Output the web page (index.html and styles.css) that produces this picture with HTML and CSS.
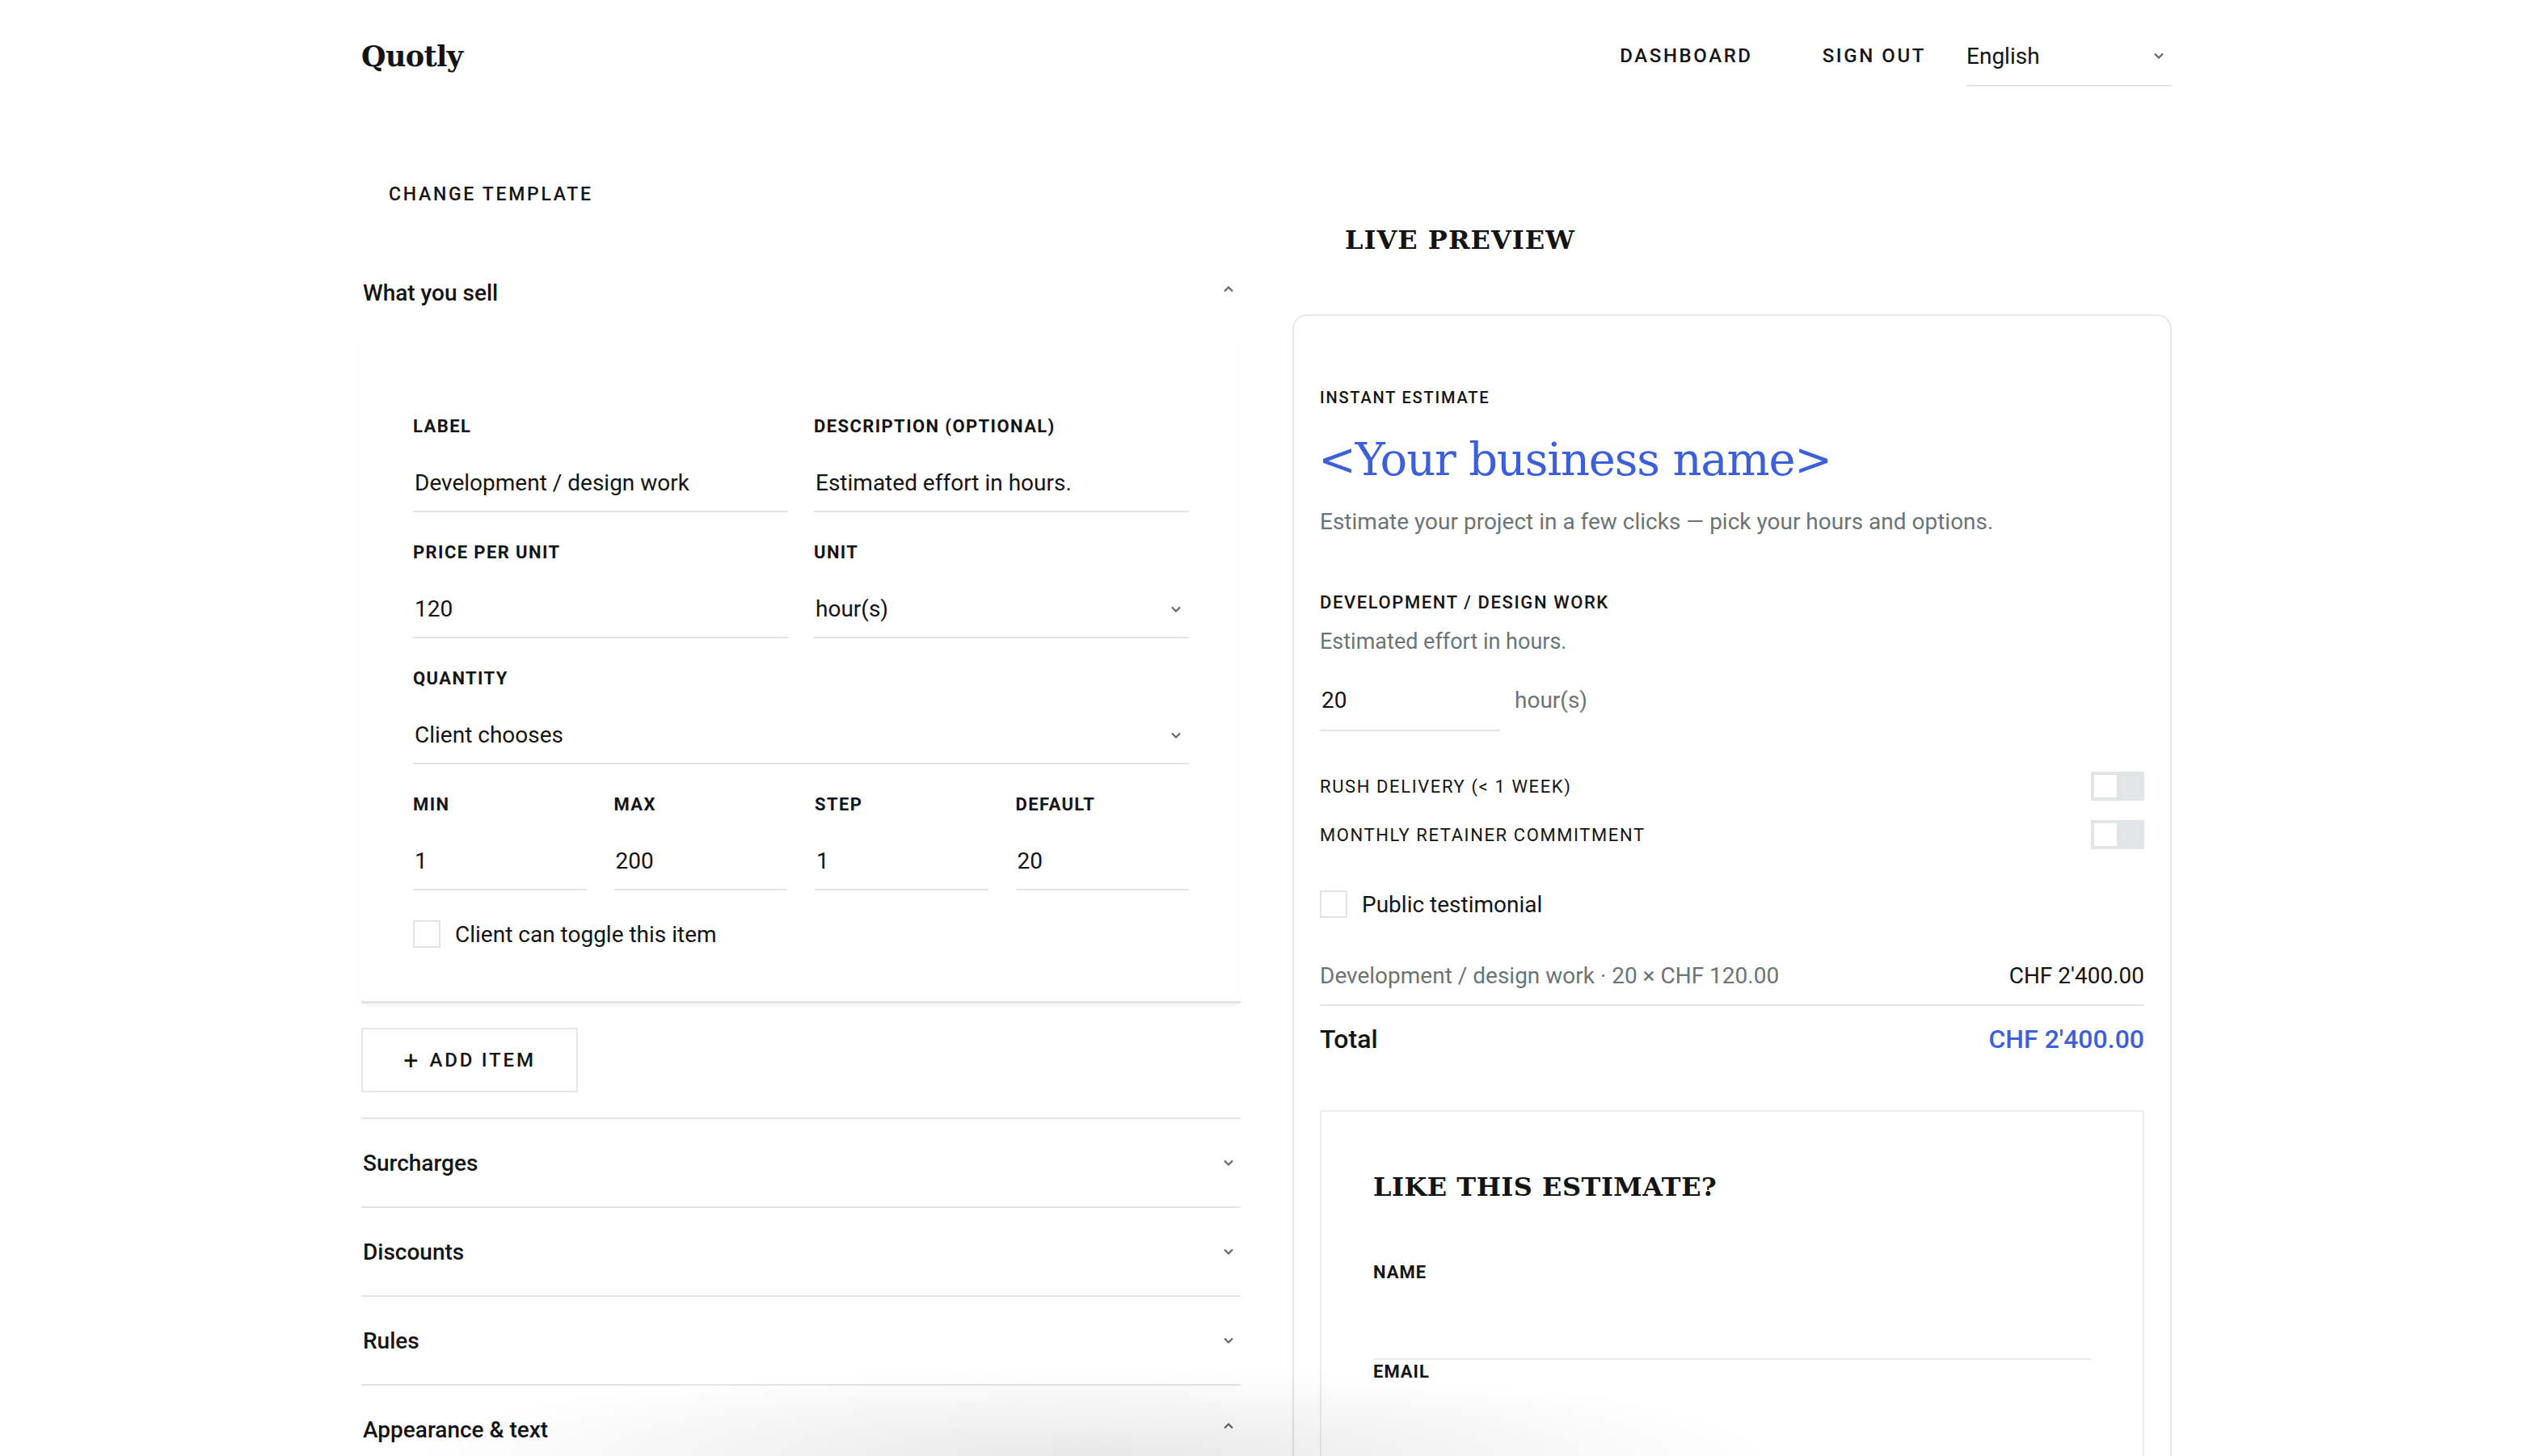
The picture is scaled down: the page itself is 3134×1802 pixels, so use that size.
FILE: index.html
```html
<!DOCTYPE html>
<html lang="en">
<head>
    <meta charset="UTF-8">
    <meta name="viewport" content="width=device-width, initial-scale=1.0">
    <title>Quotly - Editor</title>
    <link rel="stylesheet" href="styles.css">
</head>
<body>
    <header class="topbar">
        <div class="logo">Quotly</div>
        <nav class="nav">
            <a class="nav-link" href="#">Dashboard</a>
            <a class="nav-link nav-link-last" href="#">Sign out</a>
            <div class="lang-select">
                <span>English</span>
                <svg class="chevron" width="12" height="8" viewBox="0 0 12 8"><polyline points="1,1.5 6,6.5 11,1.5"/></svg>
            </div>
        </nav>
    </header>

    <main class="layout">
        <!-- Editor column -->
        <section class="editor">
            <button class="text-button">Change template</button>

            <div class="section section-open">
                <div class="section-head">
                    <span>What you sell</span>
                    <svg class="chevron chevron-up" width="12" height="8" viewBox="0 0 12 8"><polyline points="1,6.5 6,1.5 11,6.5"/></svg>
                </div>

                <div class="item-panel">
                    <div class="row row-2">
                        <div class="field">
                            <label>Label</label>
                            <div class="input">Development / design work</div>
                        </div>
                        <div class="field">
                            <label>Description (optional)</label>
                            <div class="input">Estimated effort in hours.</div>
                        </div>
                    </div>
                    <div class="row row-2">
                        <div class="field">
                            <label>Price per unit</label>
                            <div class="input">120</div>
                        </div>
                        <div class="field">
                            <label>Unit</label>
                            <div class="input input-select">
                                <span>hour(s)</span>
                                <svg class="chevron" width="12" height="8" viewBox="0 0 12 8"><polyline points="1,1.5 6,6.5 11,1.5"/></svg>
                            </div>
                        </div>
                    </div>
                    <div class="row">
                        <div class="field">
                            <label>Quantity</label>
                            <div class="input input-select">
                                <span>Client chooses</span>
                                <svg class="chevron" width="12" height="8" viewBox="0 0 12 8"><polyline points="1,1.5 6,6.5 11,1.5"/></svg>
                            </div>
                        </div>
                    </div>
                    <div class="row row-4">
                        <div class="field">
                            <label>Min</label>
                            <div class="input">1</div>
                        </div>
                        <div class="field">
                            <label>Max</label>
                            <div class="input">200</div>
                        </div>
                        <div class="field">
                            <label>Step</label>
                            <div class="input">1</div>
                        </div>
                        <div class="field">
                            <label>Default</label>
                            <div class="input">20</div>
                        </div>
                    </div>
                    <div class="check-row">
                        <span class="checkbox"></span>
                        <span>Client can toggle this item</span>
                    </div>
                </div>

                <button class="outline-button"><span class="plus">+</span>Add item</button>
            </div>

            <div class="section">
                <div class="section-head">
                    <span>Surcharges</span>
                    <svg class="chevron" width="12" height="8" viewBox="0 0 12 8"><polyline points="1,1.5 6,6.5 11,1.5"/></svg>
                </div>
            </div>
            <div class="section">
                <div class="section-head">
                    <span>Discounts</span>
                    <svg class="chevron" width="12" height="8" viewBox="0 0 12 8"><polyline points="1,1.5 6,6.5 11,1.5"/></svg>
                </div>
            </div>
            <div class="section">
                <div class="section-head">
                    <span>Rules</span>
                    <svg class="chevron" width="12" height="8" viewBox="0 0 12 8"><polyline points="1,1.5 6,6.5 11,1.5"/></svg>
                </div>
            </div>
            <div class="section">
                <div class="section-head">
                    <span>Appearance &amp; text</span>
                    <svg class="chevron chevron-up" width="12" height="8" viewBox="0 0 12 8"><polyline points="1,6.5 6,1.5 11,6.5"/></svg>
                </div>
            </div>
        </section>

        <!-- Preview column -->
        <section class="preview">
            <h2 class="preview-title">Live preview</h2>

            <div class="preview-card">
                <div class="eyebrow">Instant estimate</div>
                <h1 class="business-name">&lt;Your business name&gt;</h1>
                <p class="tagline">Estimate your project in a few clicks — pick your hours and options.</p>

                <div class="item-label">Development / design work</div>
                <div class="item-desc">Estimated effort in hours.</div>
                <div class="qty-row">
                    <div class="qty-input">20</div>
                    <span class="qty-unit">hour(s)</span>
                </div>

                <div class="toggle-row">
                    <span>Rush delivery (&lt; 1 week)</span>
                    <span class="toggle"><span class="knob"></span></span>
                </div>
                <div class="toggle-row">
                    <span>Monthly retainer commitment</span>
                    <span class="toggle"><span class="knob"></span></span>
                </div>

                <div class="check-row preview-check">
                    <span class="checkbox"></span>
                    <span>Public testimonial</span>
                </div>

                <div class="line-item">
                    <span class="muted">Development / design work · 20 × CHF 120.00</span>
                    <span>CHF 2'400.00</span>
                </div>
                <div class="total-row">
                    <span>Total</span>
                    <span class="total-amount">CHF 2'400.00</span>
                </div>

                <div class="lead-card">
                    <h3 class="lead-title">Like this estimate?</h3>
                    <label class="lead-label">Name</label>
                    <div class="lead-input"></div>
                    <label class="lead-label lead-label-tight">Email</label>
                    <div class="lead-input"></div>
                </div>
            </div>
        </section>
    </main>

    <div class="bottom-fade"></div>
</body>
</html>
```

FILE: styles.css
```css
body {
    font-family: Roboto, "Noto Sans", Arial, sans-serif;
    color: #141414;
    background-color: #fff;
    margin: 0;
    overflow: hidden;
}

a {
    color: inherit;
    text-decoration: none;
}

button {
    font-family: inherit;
    color: inherit;
    background: none;
    cursor: pointer;
}

.chevron {
    fill: none;
    stroke: #5f686b;
    stroke-width: 2.2;
    flex-shrink: 0;
}

.chevron-up {
    margin-top: -8px;
}

/* Top bar */

.topbar {
    width: 2240px;
    height: 138px;
    margin: 0 auto;
    display: flex;
    align-items: center;
    justify-content: space-between;
}

.logo {
    font-family: "DejaVu Serif", serif;
    font-weight: bold;
    font-size: 35px;
    letter-spacing: -0.6px;
}

.nav {
    display: flex;
    align-items: center;
}

.nav-link {
    font-size: 24px;
    font-weight: 500;
    letter-spacing: 2.6px;
    text-transform: uppercase;
    margin-right: 86px;
}

.nav-link-last {
    margin-right: 50px;
}

.lang-select {
    width: 254px;
    height: 74px;
    border-bottom: 2px solid #e1e5e5;
    display: flex;
    align-items: center;
    justify-content: space-between;
    font-size: 28px;
    box-sizing: border-box;
    padding-right: 10px;
    margin-top: 2px;
}

/* Two columns */

.layout {
    width: 2240px;
    margin: 0 auto;
    display: grid;
    grid-template-columns: 1088px 1fr;
    column-gap: 64px;
}

/* Editor */

.text-button {
    border: none;
    font-size: 23px;
    font-weight: 500;
    letter-spacing: 2.7px;
    text-transform: uppercase;
    height: 64px;
    padding: 0 34px;
    margin-top: 70px;
    display: block;
}

.section {
    border-top: 2px solid #e3e6e6;
}

.section-open {
    border-top: none;
    margin-top: 35px;
}

.section-head {
    height: 108px;
    display: flex;
    align-items: center;
    justify-content: space-between;
    padding: 0 9px 0 2px;
    font-size: 28px;
    font-weight: 500;
}

.section-open .section-head {
    height: 110px;
}

.item-panel {
    padding: 98px 64px 66px;
    border-bottom: 3px solid #e2e4e4;
    box-shadow: 0 5px 6px -3px rgba(0, 0, 0, 0.07);
}

.row {
    display: grid;
    grid-template-columns: 1fr;
    column-gap: 32px;
    margin-bottom: 37px;
}

.row-2 {
    grid-template-columns: 1fr 1fr;
}

.row-4 {
    grid-template-columns: repeat(4, 1fr);
    column-gap: 34px;
}

.field label {
    display: block;
    font-size: 22px;
    line-height: 26px;
    font-weight: 700;
    text-transform: uppercase;
    letter-spacing: 1.4px;
}

.input {
    font-size: 28px;
    line-height: 33px;
    padding: 40px 2px 18px;
    border-bottom: 2px solid #e1e5e5;
}

.input-select {
    display: flex;
    align-items: center;
    justify-content: space-between;
    padding-right: 10px;
}

.check-row {
    display: flex;
    align-items: center;
    font-size: 28px;
    gap: 18px;
}

.checkbox {
    width: 34px;
    height: 34px;
    box-sizing: border-box;
    border: 2px solid #e1e5e5;
}

.outline-button {
    display: flex;
    align-items: center;
    justify-content: center;
    width: 268px;
    height: 80px;
    margin: 30px 0 31px;
    border: 2px solid #e6e6e6;
    font-size: 24px;
    font-weight: 500;
    letter-spacing: 2.8px;
    text-transform: uppercase;
}

.plus {
    font-size: 32px;
    font-weight: 400;
    margin-right: 14px;
    letter-spacing: 0;
}

/* Preview */

.preview-title {
    font-family: "DejaVu Serif", serif;
    font-weight: bold;
    font-size: 32px;
    line-height: 44px;
    letter-spacing: 1px;
    text-transform: uppercase;
    margin: 137px 0 70px 65px;
}

.preview-card {
    border: 2px solid #e6e8e8;
    border-radius: 18px;
    padding: 89px 32px 0;
    height: 1500px;
}

.eyebrow {
    font-size: 20px;
    line-height: 24px;
    font-weight: 500;
    letter-spacing: 1.8px;
    text-transform: uppercase;
}

.business-name {
    font-family: "DejaVu Serif", serif;
    font-weight: normal;
    font-size: 56px;
    line-height: 70px;
    letter-spacing: -1.2px;
    color: #3d5fd9;
    margin: 30px 0 0 -2px;
}

.tagline {
    font-size: 28px;
    line-height: 34px;
    color: #6b7477;
    margin: 25px 0 0;
}

.item-label {
    font-size: 22px;
    line-height: 26px;
    font-weight: 500;
    letter-spacing: 1.6px;
    text-transform: uppercase;
    margin-top: 70px;
}

.item-desc {
    font-size: 27px;
    line-height: 32px;
    color: #6b7477;
    margin-top: 19px;
}

.qty-row {
    display: flex;
    align-items: flex-start;
    margin-top: 24px;
}

.qty-input {
    width: 223px;
    box-sizing: border-box;
    font-size: 28px;
    line-height: 33px;
    padding: 16px 2px 20px;
    border-bottom: 2px solid #e1e5e5;
}

.qty-unit {
    font-size: 28px;
    line-height: 33px;
    color: #6b7477;
    padding: 16px 0 0 18px;
}

.toggle-row {
    display: flex;
    align-items: center;
    justify-content: space-between;
    font-size: 22px;
    letter-spacing: 1.6px;
    text-transform: uppercase;
    margin-top: 50px;
}

.toggle-row + .toggle-row {
    margin-top: 24px;
}

.toggle {
    width: 66px;
    height: 36px;
    box-sizing: border-box;
    padding: 4px;
    background-color: #e1e5e5;
}

.knob {
    display: block;
    width: 28px;
    height: 28px;
    background-color: #fff;
}

.preview-check {
    margin-top: 51px;
}

.line-item {
    display: flex;
    justify-content: space-between;
    font-size: 28px;
    line-height: 34px;
    margin-top: 55px;
    padding-bottom: 18px;
    border-bottom: 2px solid #e3e6e6;
}

.muted {
    color: #6b7477;
}

.total-row {
    display: flex;
    justify-content: space-between;
    font-size: 32px;
    line-height: 38px;
    font-weight: 500;
    margin-top: 22px;
}

.total-amount {
    color: #3d5fd9;
}

.lead-card {
    border: 2px solid #eceeee;
    margin-top: 69px;
    padding: 71px 64px 0;
    height: 600px;
}

.lead-title {
    font-family: "DejaVu Serif", serif;
    font-weight: bold;
    font-size: 32px;
    line-height: 44px;
    letter-spacing: 0.5px;
    text-transform: uppercase;
    margin: 0;
}

.lead-label {
    display: block;
    font-size: 22px;
    line-height: 26px;
    font-weight: 700;
    letter-spacing: 1px;
    text-transform: uppercase;
    margin-top: 71px;
}

.lead-label-tight {
    margin-top: 2px;
}

.lead-input {
    height: 93px;
    border-bottom: 2px solid #eceeee;
}

/* soft shadow peeking in at the bottom edge */
.bottom-fade {
    position: fixed;
    left: 500px;
    bottom: 0;
    width: 1700px;
    height: 110px;
    background: radial-gradient(ellipse at 50% 100%, rgba(0, 0, 0, 0.09), rgba(0, 0, 0, 0) 70%);
    pointer-events: none;
}
```
